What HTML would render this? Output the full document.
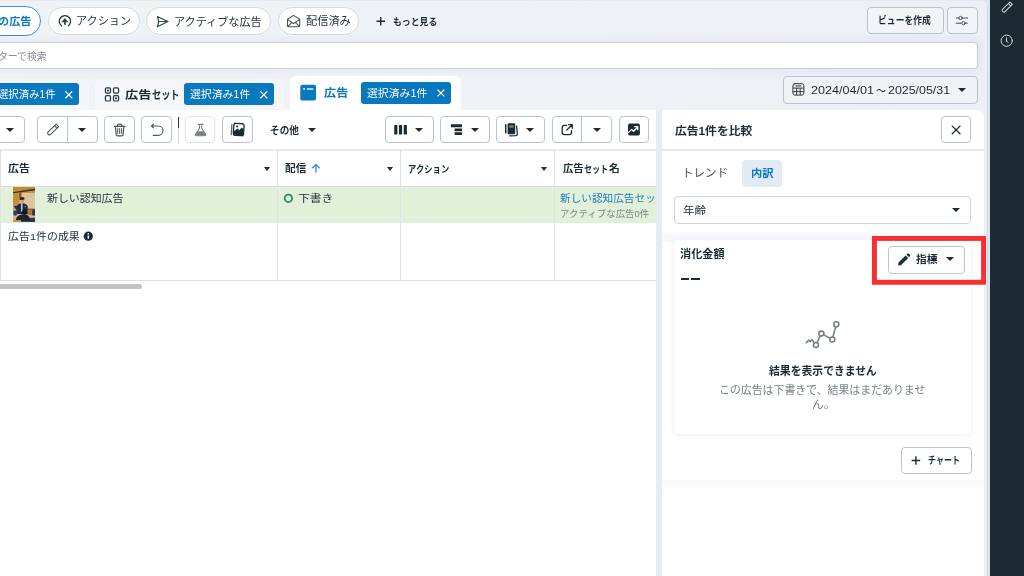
<!DOCTYPE html>
<html lang="ja">
<head>
<meta charset="utf-8">
<title>広告マネージャ</title>
<style>
*{box-sizing:border-box;margin:0;padding:0}
html,body{width:1024px;height:576px;overflow:hidden}
body{position:relative;font-family:"Liberation Sans","Noto Sans CJK JP",sans-serif;color:#1c2b33;background:#dbe5ee}
#main{left:0;top:0;width:987px;height:576px;border-radius:0 7px 0 0;
 background:linear-gradient(95deg,#f0f3f6 0%,#eff2f6 50%,#edeff6 100%)}
.a{position:absolute}
.t{position:absolute;white-space:nowrap;line-height:16px;height:16px;transform-origin:0 50%;font-size:11px}
.b{font-weight:700}
.m{font-weight:500}
.btn{position:absolute;border:1px solid #b9c3cf;border-radius:4px;background:#fff}
.chip{position:absolute;top:6.8px;height:28.6px;border:1px solid #d5dae1;border-radius:15px;background:#fff}
.badge{position:absolute;background:#0a78be;border-radius:3px;color:#fff}
svg{position:absolute;overflow:visible}
.car{position:absolute;width:0;height:0;border-left:4.1px solid transparent;border-right:4.1px solid transparent;border-top:4.7px solid #1c2b33}
.car.s{border-left-width:3.6px;border-right-width:3.6px;border-top-width:4.1px}
</style>
</head>
<body>

<!-- ===== right dark rail ===== -->
<div class="a" id="main"></div>
<div class="a" style="left:0;top:0;width:982px;height:1.2px;background:linear-gradient(180deg,#e2e6ea,#eaedf1)"></div>
<div class="a" style="left:987px;top:6px;width:1px;height:570px;background:#d6dbe0"></div>
<div class="a" style="left:990px;top:0;width:34px;height:576px;background:#1c2b33"></div>

<!-- ===== top chips row ===== -->
<div class="chip" style="left:-60px;width:101.3px;top:6px;height:30.2px;border:1.6px solid #3f8fd0;border-radius:16px"></div>
<div class="t b" id="t_chip1" style="left:-1.57px;top:13.00px;color:#0a78be;font-size:10.59px;transform:scaleX(1.0547)">の広告</div>

<div class="chip" style="left:48.2px;width:91.8px"></div>
<div class="t" id="t_chip2" style="left:76.06px;top:13.00px;color:#27343c;transform:scaleX(1.0147);font-size:10.98px">アクション</div>

<div class="chip" style="left:146.4px;width:124.3px"></div>
<div class="t" id="t_chip3" style="left:174.08px;top:14.00px;color:#27343c;transform:scaleX(1.0154);font-size:10.94px">アクティブな広告</div>

<div class="chip" style="left:277.7px;width:81.2px"></div>
<div class="t" id="t_chip4" style="left:305.80px;top:13.00px;color:#27343c;transform:scaleX(1.0291);font-size:10.88px">配信済み</div>

<div class="t b" id="t_more" style="left:392.66px;top:14.00px;transform:scaleX(0.9442);font-size:9.38px">もっと見る</div>

<div class="btn" style="left:867.2px;top:6.6px;width:76.4px;height:27.8px;background:#f2f4f8"></div>
<div class="t b" id="t_view" style="left:878.04px;top:13.00px;transform:scaleX(0.8777);font-size:10.05px">ビューを作成</div>
<div class="btn" style="left:947.2px;top:6.6px;width:30.4px;height:27.8px;background:#f2f4f8"></div>

<!-- ===== search ===== -->
<div class="a" style="left:-10px;top:42.3px;width:987.6px;height:26.6px;border:1px solid #c9cfd7;border-radius:4px;background:#fff;box-shadow:0 0 7px 3px rgba(120,110,180,.07)"></div>
<div class="t" id="t_search" style="left:-1.54px;top:49.00px;color:#878e96;font-size:10.26px;transform:scaleX(0.9600)">ターで検索</div>

<!-- ===== tabs row ===== -->
<div class="a" style="left:-20px;top:79px;width:108.8px;height:40px;border-radius:6px 6px 0 0;background:#f4f6f9"></div>
<div class="badge" style="left:-30px;top:83.3px;width:109.4px;height:21.6px"></div>
<div class="t" id="t_b1" style="left:-2.13px;top:86.00px;color:#fff;transform:scaleX(0.9850);font-size:10.53px">選択済み1件</div>

<div class="a" style="left:95.4px;top:79px;width:188.4px;height:40px;border-radius:6px 6px 0 0;background:#f4f6f9"></div>
<div class="t b" id="t_tab2a" style="left:125.29px;top:87.00px;font-size:10.95px;transform:scaleX(1.2067)">広告</div>
<div class="t b" id="t_tab2b" style="left:151.59px;top:87.00px;font-size:11.74px;transform:scaleX(0.7808)">セット</div>
<div class="badge" style="left:184.1px;top:83.3px;width:90.4px;height:21.6px"></div>
<div class="t" id="t_b2" style="left:189.99px;top:87.00px;color:#fff;transform:scaleX(1.0525);font-size:10.30px">選択済み1件</div>

<div class="a" style="left:289.9px;top:75.6px;width:170.8px;height:40px;border-radius:6px 6px 0 0;background:#fff"></div>
<div class="t b" id="t_tab3" style="left:324.01px;top:85.00px;font-size:11.13px;color:#0a78be;transform:scaleX(1.0907)">広告</div>
<div class="badge" style="left:360.7px;top:82px;width:90.7px;height:21.5px"></div>
<div class="t" id="t_b3" style="left:367.01px;top:86.00px;color:#fff;transform:scaleX(1.0764);font-size:10.09px">選択済み1件</div>

<div class="btn" style="left:782.8px;top:75.8px;width:194.8px;height:27.8px;background:#f0f2f6"></div>
<div class="t" id="t_date1" style="left:810.79px;top:82.00px;font-size:11.21px;transform:scaleX(1.1227)">2024/04/01</div>
<div class="t" id="t_date2" style="left:876.31px;top:83.00px;font-size:13px;transform:scaleX(0.7675)">～</div>
<div class="t" id="t_date3" style="left:888.32px;top:82.00px;font-size:11.18px;transform:scaleX(1.1094)">2025/05/31</div>
<div class="car" style="left:958.1px;top:87.6px"></div>

<!-- ===== left panel (table) ===== -->
<div class="a" style="left:-10px;top:110px;width:665.6px;height:470px;background:#fff"></div>
<div class="a" style="left:655.6px;top:110px;width:6px;height:470px;background:#e7ebf3"></div>

<!-- ===== right panel ===== -->
<div class="a" style="left:661.5px;top:110px;width:322.5px;height:470px;background:#fff;border-radius:0 7px 0 0"></div>

<!-- ===== toolbar ===== -->
<div class="btn" style="left:-10px;top:116.2px;width:35px;height:27.3px"></div>
<div class="car" style="left:5.6px;top:127.5px"></div>

<div class="btn" style="left:37.3px;top:116.2px;width:60.4px;height:27.3px"></div>
<div class="a" style="left:67px;top:117px;width:1px;height:26px;background:#b9c3cf"></div>
<div class="car" style="left:78.4px;top:127.5px"></div>

<div class="btn" style="left:104.1px;top:116.2px;width:30.7px;height:27.3px"></div>
<div class="btn" style="left:141.2px;top:116.2px;width:30.7px;height:27.3px"></div>

<div class="a" style="left:178px;top:116.5px;width:1px;height:27px;background:#d3d8de"></div>
<div class="a" style="left:177.9px;top:116.5px;width:1.3px;height:11px;background:#2a3840"></div>

<div class="btn" style="left:185px;top:116.2px;width:30.3px;height:27.3px;border-color:#dfe3ea"></div>
<div class="btn" style="left:222.1px;top:116.2px;width:30.6px;height:27.3px"></div>

<div class="t b" id="t_other" style="left:270.40px;top:123.00px;font-size:10.07px;transform:scaleX(0.9592)">その他</div>
<div class="car" style="left:307.5px;top:127.5px"></div>

<div class="btn" style="left:385.4px;top:116.2px;width:49.1px;height:27.3px"></div>
<div class="car" style="left:415px;top:127.5px"></div>
<div class="btn" style="left:440.4px;top:116.2px;width:49.4px;height:27.3px"></div>
<div class="car" style="left:470.5px;top:127.5px"></div>
<div class="btn" style="left:496.1px;top:116.2px;width:49.4px;height:27.3px"></div>
<div class="car" style="left:526.1px;top:127.5px"></div>

<div class="btn" style="left:551.8px;top:116.2px;width:60px;height:27.3px"></div>
<div class="a" style="left:581.3px;top:117px;width:1px;height:26px;background:#b9c3cf"></div>
<div class="car" style="left:592.8px;top:127.5px"></div>
<div class="btn" style="left:618.6px;top:116.2px;width:30.4px;height:27.3px"></div>

<!-- ===== table ===== -->
<div class="a" style="left:0;top:149px;width:655.6px;height:2px;background:#e6e8eb"></div>
<div class="a" style="left:0;top:186.2px;width:655.6px;height:1px;background:#dadde1"></div>
<div class="a" style="left:0;top:187.1px;width:655.6px;height:36px;background:#e2efd9"></div>
<div class="a" style="left:0;top:280px;width:655.6px;height:1px;background:#e0e3e6"></div>
<div class="a" style="left:0;top:150px;width:1px;height:130px;background:#e0e3e6"></div>
<div class="a" style="left:277.2px;top:150px;width:1px;height:130px;background:#dfe2e6"></div>
<div class="a" style="left:399.9px;top:150px;width:1px;height:130px;background:#dfe2e6"></div>
<div class="a" style="left:553.9px;top:150px;width:1px;height:130px;background:#dfe2e6"></div>

<div class="t b" id="t_h1" style="left:7.57px;top:161.00px;font-size:9.8px;transform:scaleX(1.1134)">広告</div>
<div class="car s" style="left:263.9px;top:167.2px"></div>
<div class="t b" id="t_h2" style="left:284.83px;top:161.00px;font-size:9.8px;transform:scaleX(1.0901)">配信</div>
<div class="car s" style="left:387px;top:167.2px"></div>
<div class="t b" id="t_h3" style="left:407.94px;top:162.00px;font-size:10.0px;transform:scaleX(0.8329)">アクション</div>
<div class="car s" style="left:541px;top:167.2px"></div>
<div class="t b" id="t_h4a" style="left:562.68px;top:161.00px;font-size:9.8px;transform:scaleX(1.0549)">広告</div>
<div class="t b" id="t_h4b" style="left:584.43px;top:162.00px;font-size:10.0px;transform:scaleX(0.8122)">セット</div>
<div class="t b" id="t_h4c" style="left:608.55px;top:161.00px;font-size:9.8px;transform:scaleX(1.1004)">名</div>

<div class="t" id="t_r1" style="left:46.97px;top:191.00px;font-size:10.38px;color:#27343c;transform:scaleX(1.0529)">新しい認知広告</div>
<div class="t" id="t_r2" style="left:298.37px;top:191.00px;font-size:9.85px;color:#27343c;transform:scaleX(1.1989)">下書き</div>
<div class="a" style="left:555px;top:187.1px;width:100.6px;height:36px;overflow:hidden">
 <div class="t" id="t_r3" style="left:5.05px;top:3.91px;font-size:10.41px;color:#1d7cc2;transform:scaleX(1.0227)">新しい認知広告セット</div>
 <div class="t" id="t_r4" style="left:5.17px;top:18.91px;font-size:9.29px;color:#7b8289;transform:scaleX(1.0180)">アクティブな広告0件</div>
</div>
<div class="t" id="t_s1" style="left:8.42px;top:229.00px;font-size:9.89px;color:#27343c;transform:scaleX(1.1094)">広告1件の成果</div>

<div class="a" style="left:-10px;top:283.6px;width:151.8px;height:5.3px;border-radius:3px;background:#c1c3c5"></div>

<!-- ===== compare panel content ===== -->
<div class="t b" id="t_p1" style="left:674.88px;top:123.00px;font-size:10.94px;transform:scaleX(1.0773)">広告1件を比較</div>
<div class="btn" style="left:941px;top:116.2px;width:30.4px;height:27.3px"></div>
<div class="a" style="left:661.5px;top:149px;width:322.5px;height:2px;background:#e7eaee"></div>

<div class="t" id="t_p2" style="left:682.46px;top:165.00px;font-size:11.66px;color:#47525b;transform:scaleX(0.9910)">トレンド</div>
<div class="a" style="left:742px;top:159.6px;width:40px;height:27.4px;border-radius:4px;background:#e0ebf6"></div>
<div class="t b" id="t_p3" style="left:751.33px;top:166.00px;font-size:10.15px;color:#0a78be;transform:scaleX(1.1136)">内訳</div>

<div class="btn" style="left:674.3px;top:196.4px;width:297.2px;height:27.6px;border-color:#d0d5dc"></div>
<div class="t" id="t_p4" style="left:682.65px;top:203.00px;font-size:10.43px;transform:scaleX(1.1090)">年齢</div>
<div class="car" style="left:952px;top:208px"></div>

<div class="a" style="left:661.5px;top:230px;width:322.5px;height:12px;background:linear-gradient(180deg,#fff,#f7f8fa 45%,#f6f7fa)"></div>
<div class="a" style="left:674px;top:239.8px;width:297.3px;height:194px;border-radius:4px;background:#fff;box-shadow:0 0 0 1px #f3f5f8,0 1px 6px rgba(60,80,120,.09)"></div>
<div class="t b" id="t_p5" style="left:680.15px;top:246.00px;font-size:10.85px;transform:scaleX(1.0263)">消化金額</div>
<div class="a" style="left:680.7px;top:277.8px;width:8.6px;height:2.2px;background:#1c2b33"></div>
<div class="a" style="left:691.1px;top:277.8px;width:8.7px;height:2.2px;background:#1c2b33"></div>

<div class="btn" style="left:888.3px;top:246px;width:77.1px;height:27.6px"></div>
<div class="t b" id="t_p6" style="left:916.09px;top:252.00px;font-size:10.28px;transform:scaleX(1.0460)">指標</div>
<div class="car" style="left:946px;top:257.4px"></div>

<div class="t b" id="t_p7" style="left:768.81px;top:363.00px;font-size:11.83px;transform:scaleX(0.9153)">結果を表示できません</div>
<div class="t" id="t_p8" style="left:719.22px;top:382.00px;font-size:11.15px;color:#778088;transform:scaleX(0.9784)">この広告は下書きで、結果はまだありませ</div>
<div class="t" id="t_p9" style="left:811.82px;top:396.00px;font-size:10.59px;color:#778088;transform:scaleX(1.1112)">ん。</div>

<div class="btn" style="left:900.6px;top:446.5px;width:71.3px;height:27.9px"></div>
<div class="t b" id="t_p10" style="left:927.63px;top:453.00px;font-size:10.13px;transform:scaleX(0.7895)">チャート</div>

<div class="a" style="left:661.5px;top:480px;width:322.5px;height:10px;background:linear-gradient(180deg,#f7f8fb,#fff)"></div>

<!-- thumbnail -->
<svg width="22" height="34.7" viewBox="0 0 22 34.7" style="left:13.1px;top:187.3px;overflow:hidden">
 <defs>
  <linearGradient id="tw" x1="0" y1="0" x2="0" y2="1"><stop offset="0" stop-color="#b9852f"/><stop offset=".2" stop-color="#c9994a"/><stop offset=".45" stop-color="#dcc094"/><stop offset="1" stop-color="#d4b07a"/></linearGradient>
  <filter id="tb" x="-10%" y="-10%" width="120%" height="120%"><feGaussianBlur stdDeviation=".42"/></filter>
 </defs>
 <rect width="22" height="34.7" fill="url(#tw)"/>
 <g filter="url(#tb)">
  <rect x="-1" y="-1" width="24" height="4.6" fill="#c08a32"/>
  <path d="M-1 5.2L23 1.6V3.2L-1 6.6Z" fill="#3d3520"/>
  <rect x="-1" y="6.4" width="7.4" height="16" fill="#c48f3c"/>
  <rect x="8.6" y="6" width="14" height="17" fill="#dbc49e"/>
  <rect x="6.1" y="5.6" width="2.3" height="7" fill="#93561c"/>
  <rect x="14.4" y="21.6" width="8" height="1.7" fill="#8a5a2e"/>
  <rect x="14.4" y="23.3" width="8" height="5" fill="#a9793f"/>
  <rect x="15" y="28.4" width="8" height="2.4" fill="#dcb888"/>
  <rect x="19.2" y="22.6" width="3.5" height="6" rx="1.2" fill="#27344e"/>
  <rect x=".4" y="23.4" width="3.6" height="5" rx="1" fill="#2a406a"/>
  <!-- speaker -->
  <path d="M3.6 19.2C5 17 7 16.2 9 16.2 11.6 16.2 14 17 14.8 19.4L14.6 27H4.4L3.2 22.4 1 19.6 1.8 18.2Z" fill="#1f2944"/>
  <rect x="8.1" y="16.4" width="1.3" height="8.6" fill="#e4e1de"/>
  <ellipse cx="9.4" cy="13.6" rx="1.7" ry="2.1" fill="#c89a78"/>
  <path d="M7.1 12.6C7.1 10.4 11.4 10 11.6 12.6 10.8 11.8 8.4 12 7.1 13.2Z" fill="#1a1a1e"/>
  <ellipse cx="9.3" cy="11.5" rx="2.2" ry="1.3" fill="#1a1a1e"/>
  <circle cx="1.6" cy="18.2" r="1" fill="#c89a78"/>
  <circle cx="12.4" cy="19.6" r=".7" fill="#b98c6c"/>
  <!-- audience -->
  <ellipse cx="11.3" cy="25.3" rx="2.7" ry="2.6" fill="#15181f"/>
  <path d="M2.6 34.7C2.8 29.4 6 27.6 11 27.6 15.4 27.6 17 29.6 17.2 34.7Z" fill="#1a2030"/>
  <rect x="17" y="30.8" width="6" height="4.4" fill="#2a3650"/>
  <rect x="-1" y="33" width="9" height="2.4" fill="#c98f4e"/>
 </g>
</svg>
<!-- ===== icons ===== -->
<svg width="1024" height="576" style="left:0;top:0" viewBox="0 0 1024 576" fill="none" stroke="#2a3740" stroke-width="1.25" stroke-linecap="round" stroke-linejoin="round">
 <!-- chip2: circle arrow up -->
 <path d="M61.4 25.8A5.7 5.7 0 1 1 68.4 25.8" stroke="#27343c" stroke-width="1.3"/>
 <path d="M61.9 21.8L64.9 18.4 67.9 21.8Z" fill="#27343c" stroke="#27343c" stroke-width=".5"/>
 <path d="M64.9 21.6V24.7" stroke="#27343c" stroke-width="1.6" stroke-linecap="butt"/>
 <!-- chip3: paper plane -->
 <path d="M157.4 16.5L167.9 21.5 157.4 26.8 158.8 21.5Z M158.8 21.5H167.6" stroke="#37444c" stroke-width="1.15"/>
 <!-- chip4: open envelope -->
 <path d="M287.5 19.3L293.55 15.4 299.7 19.3V25.8C299.7 26.4 299.3 26.8 298.7 26.8H288.5C287.9 26.8 287.5 26.4 287.5 25.8Z M287.7 19.6L293.55 23.5 299.5 19.6 M288 26.4L291.8 22.4 M299.2 26.4L295.4 22.4" stroke="#47535b" stroke-width="1.1"/>
 <!-- plus (more) -->
 <path d="M376.5 21.3H385 M380.75 17.1V25.5" stroke="#1c2b33" stroke-width="1.4" stroke-linecap="butt"/>
 <!-- sliders -->
 <path d="M956.4 18H958.9 M962.4 18H967.6 M956.2 23.2H961.7 M965.3 23.2H967.4" stroke="#36434b" stroke-width=".95"/>
 <circle cx="960.6" cy="18" r="1.65" stroke="#36434b" stroke-width=".9" fill="#f2f4f8"/>
 <circle cx="963.5" cy="23.2" r="1.65" stroke="#36434b" stroke-width=".9" fill="#f2f4f8"/>
 <!-- badge x marks -->
 <path d="M65.4 91.4L72.2 98.2 M72.2 91.4L65.4 98.2 M260.4 91.4L267.2 98.2 M267.2 91.4L260.4 98.2 M437.5 89.6L444.3 96.4 M444.3 89.6L437.5 96.4" stroke="#fff" stroke-width="1.3" stroke-linecap="butt"/>
 <!-- tab2 icon: 4 squares -->
 <g stroke="#27343c" stroke-width="1.2">
  <rect x="105.4" y="87.8" width="5.1" height="5.3" rx="1.3"/>
  <rect x="113.5" y="87.8" width="5.1" height="5.3" rx="1.3"/>
  <rect x="105.4" y="95.7" width="5.1" height="5.3" rx="1.3"/>
  <rect x="113.5" y="95.7" width="5.1" height="5.3" rx="1.3"/>
 </g>
 <circle cx="107.95" cy="90.45" r="1.05" fill="#1c2b33" stroke="none"/>
 <circle cx="116.05" cy="98.35" r="1.05" fill="#1c2b33" stroke="none"/>
 <!-- tab3 icon -->
 <rect x="300.3" y="84.8" width="15.8" height="15.8" rx="2.2" fill="#0a78be" stroke="none"/>
 <circle cx="304.1" cy="89" r="0.9" fill="#fff" stroke="none"/>
 <path d="M306.8 89H313.4" stroke="#fff" stroke-width="1.3" stroke-linecap="butt"/>
 <!-- calendar -->
 <g stroke="#2f3c44" stroke-width="1">
  <rect x="792.9" y="83.7" width="11" height="11.4" rx="2"/>
  <path d="M792.9 88.1H803.9 M792.9 91.6H803.9 M796.6 88.1V95.1 M800.2 88.1V95.1" stroke-linecap="butt"/>
  <path d="M795.6 85.9H801.2" stroke-linecap="butt" stroke-width="1.1"/>
 </g>
 <!-- toolbar: pencil outline -->
 <g transform="translate(53 129.6) rotate(-44)" stroke="#48545c" stroke-width="1.1"><path d="M-5 -1.75H6.2V1.75H-5A1.75 1.75 0 0 1 -5 -1.75Z M3.9 -1.75V1.75"/></g>
 <!-- trash -->
 <g stroke="#47535b" stroke-width="1.15">
  <path d="M114.4 126.3H124.9 M117.2 126.1C117.2 123.4 122.1 123.4 122.1 126.1 M115.4 126.6L116.2 134.6C116.3 135.4 116.9 135.8 117.6 135.8H121.7C122.4 135.8 123 135.4 123.1 134.6L123.9 126.6"/>
  <path d="M117.7 128.2V133.8 M119.65 128.2V133.8 M121.6 128.2V133.8" stroke-width="1" stroke-linecap="butt"/>
 </g>
 <!-- undo -->
 <path d="M151.7 126H158.3A4.65 4.65 0 0 1 158.3 135.3H153.2 M153.4 124.3L151.5 126 153.4 127.7" stroke="#4d5962" stroke-width="1.15"/>
 <!-- flask (disabled) -->
 <path d="M198.3 124.4H202.9" stroke="#79828a" stroke-width="1.2"/>
 <path d="M199.5 124.6V128.4L195.6 134C195.1 134.9 195.6 135.7 196.6 135.7H204.6C205.6 135.7 206.1 134.9 205.6 134L201.7 128.4V124.6" stroke="#79828a" stroke-width="1.05"/>
 <path d="M197.5 131.2H203.7L205.6 134.2C206 135 205.6 135.7 204.7 135.7H196.5C195.6 135.7 195.2 135 195.6 134.2Z" fill="#79828a" stroke="none"/>
 <!-- images stack -->
 <path d="M231.9 124.5L231.3 134.6" stroke="#59646c" stroke-width="1.3"/>
 <g transform="rotate(4 238.7 129.5)">
  <rect x="233.6" y="123.5" width="10.2" height="12" rx="1.7" fill="#fff" stroke="#1c2b33" stroke-width="1.3"/>
  <path d="M234 131.6L237.6 128.6 239.4 130.2 241.6 127.4 243.4 128.8V134.2C243.4 134.8 243 135.1 242.4 135.1H235C234.4 135.1 234 134.8 234 134.2Z" fill="#1c2b33" stroke="none"/>
  <circle cx="236.9" cy="126.6" r="1" fill="#1c2b33" stroke="none"/>
 </g>
 <!-- columns -->
 <g fill="#1c2b33" stroke="none">
  <rect x="394.2" y="124.9" width="3.2" height="9.6" rx=".4"/>
  <rect x="398.9" y="124.9" width="3.2" height="9.6" rx=".4"/>
  <rect x="403.7" y="124.9" width="3.2" height="9.6" rx=".4"/>
  <!-- breakdown -->
  <rect x="450.8" y="124.3" width="11.2" height="3" rx=".3"/>
  <rect x="454.6" y="128.5" width="7.4" height="2.7" rx=".3"/>
  <rect x="454.6" y="132.3" width="7.4" height="2.7" rx=".3"/>
 </g>
 <!-- reports -->
 <path d="M505.7 124.2V133.4" stroke="#1c2b33" stroke-width="1.5" stroke-linecap="butt"/>
 <path d="M516.6 126.2L517.3 133.6C517.4 134.8 516.6 135.5 515.6 135.6L509.6 135.8" stroke="#1c2b33" stroke-width="1.3"/>
 <rect x="507.6" y="123.3" width="7.6" height="11" rx="1.2" fill="#1c2b33" stroke="none"/>
 <rect x="509.2" y="125.2" width="4.4" height="2.6" fill="#6b757d" stroke="none"/>
 <!-- export -->
 <path d="M566.6 125.4H564.4C563.2 125.4 562.2 126.3 562.2 127.6V132.5C562.2 133.7 563.2 134.6 564.4 134.6H569.3C570.5 134.6 571.5 133.7 571.5 132.5V130.4" stroke="#1c2b33" stroke-width="1.3"/>
 <path d="M566.8 130L572.2 124.7 M568.6 124.6H572.3V128.3" stroke="#1c2b33" stroke-width="1.3"/>
 <!-- chart button -->
 <rect x="628" y="123.6" width="11.9" height="11.9" rx="1.8" fill="#1c2b33" stroke="none"/>
 <path d="M628.4 132.6L631.6 129.4 633.6 131.2 637.4 127.2 M634.6 126.6H637.8V129.8" stroke="#fff" stroke-width="1.3"/>
 <!-- panel close X -->
 <path d="M951.8 125.6L960.4 134.2 M960.4 125.6L951.8 134.2" stroke="#1c2b33" stroke-width="1.3" stroke-linecap="butt"/>
 <!-- sort arrow -->
 <path d="M315.9 172.2V164.6 M312.5 167.8L315.9 164.4 319.3 167.8" stroke="#2d88ff" stroke-width="1.3"/>
 <!-- draft status circle -->
 <circle cx="288.4" cy="198.35" r="3.7" stroke="#2a8a63" stroke-width="1.8"/>
 <!-- info -->
 <circle cx="88.3" cy="236.2" r="4.6" fill="#1c2b33" stroke="none"/>
 <path d="M88.3 235.6V238.7" stroke="#fff" stroke-width="1.5" stroke-linecap="butt"/>
 <circle cx="88.3" cy="233.8" r=".85" fill="#fff" stroke="none"/>
 <!-- 指標 pencil filled -->
 <path d="M905.6 255.4L908.2 258 900.9 265.2 898.2 265.5 898.5 262.6Z M906.4 254.6L907.4 253.7C907.8 253.3 908.4 253.3 908.8 253.7L909.9 254.8C910.3 255.2 910.3 255.8 909.9 256.2L909 257.2Z" fill="#1c2b33" stroke="none"/>
 <!-- red highlight -->
 <rect x="874.45" y="238.45" width="109.1" height="43.85" stroke="#fb2d30" stroke-width="4.9" stroke-linejoin="miter"/>
 <!-- line chart (empty state) -->
 <g stroke="#798188" stroke-width="1.6">
  <path d="M806.3 342.6L808.8 340.2 810.3 341.4 812 339.6 814.4 343 M817 342.6L820.2 335.8 M823.4 334.6L830.2 338.4 M832.9 337L835.7 326.8"/>
  <circle cx="815.9" cy="345" r="2.5"/>
  <circle cx="821.4" cy="333.6" r="2.5"/>
  <circle cx="832.3" cy="339.5" r="2.5"/>
  <circle cx="836.3" cy="324.2" r="2.5"/>
 </g>
 <!-- plus (chart) -->
 <path d="M911.6 460.5H920.2 M915.9 456.2V464.8" stroke="#1c2b33" stroke-width="1.4" stroke-linecap="butt"/>
 <!-- rail icons -->
 <g stroke="#d3d9de" stroke-width="1">
  <g transform="translate(1007.1 7.1) rotate(-44)"><path d="M-4.6 -1.7H5.6V1.7H-4.6A1.7 1.7 0 0 1 -4.6 -1.7Z M3.4 -1.7V1.7"/></g>
  <circle cx="1006.7" cy="40.7" r="5.6"/>
  <path d="M1006.5 37.9V41.4L1008 42.2"/>
 </g>
</svg>

</body>
</html>
